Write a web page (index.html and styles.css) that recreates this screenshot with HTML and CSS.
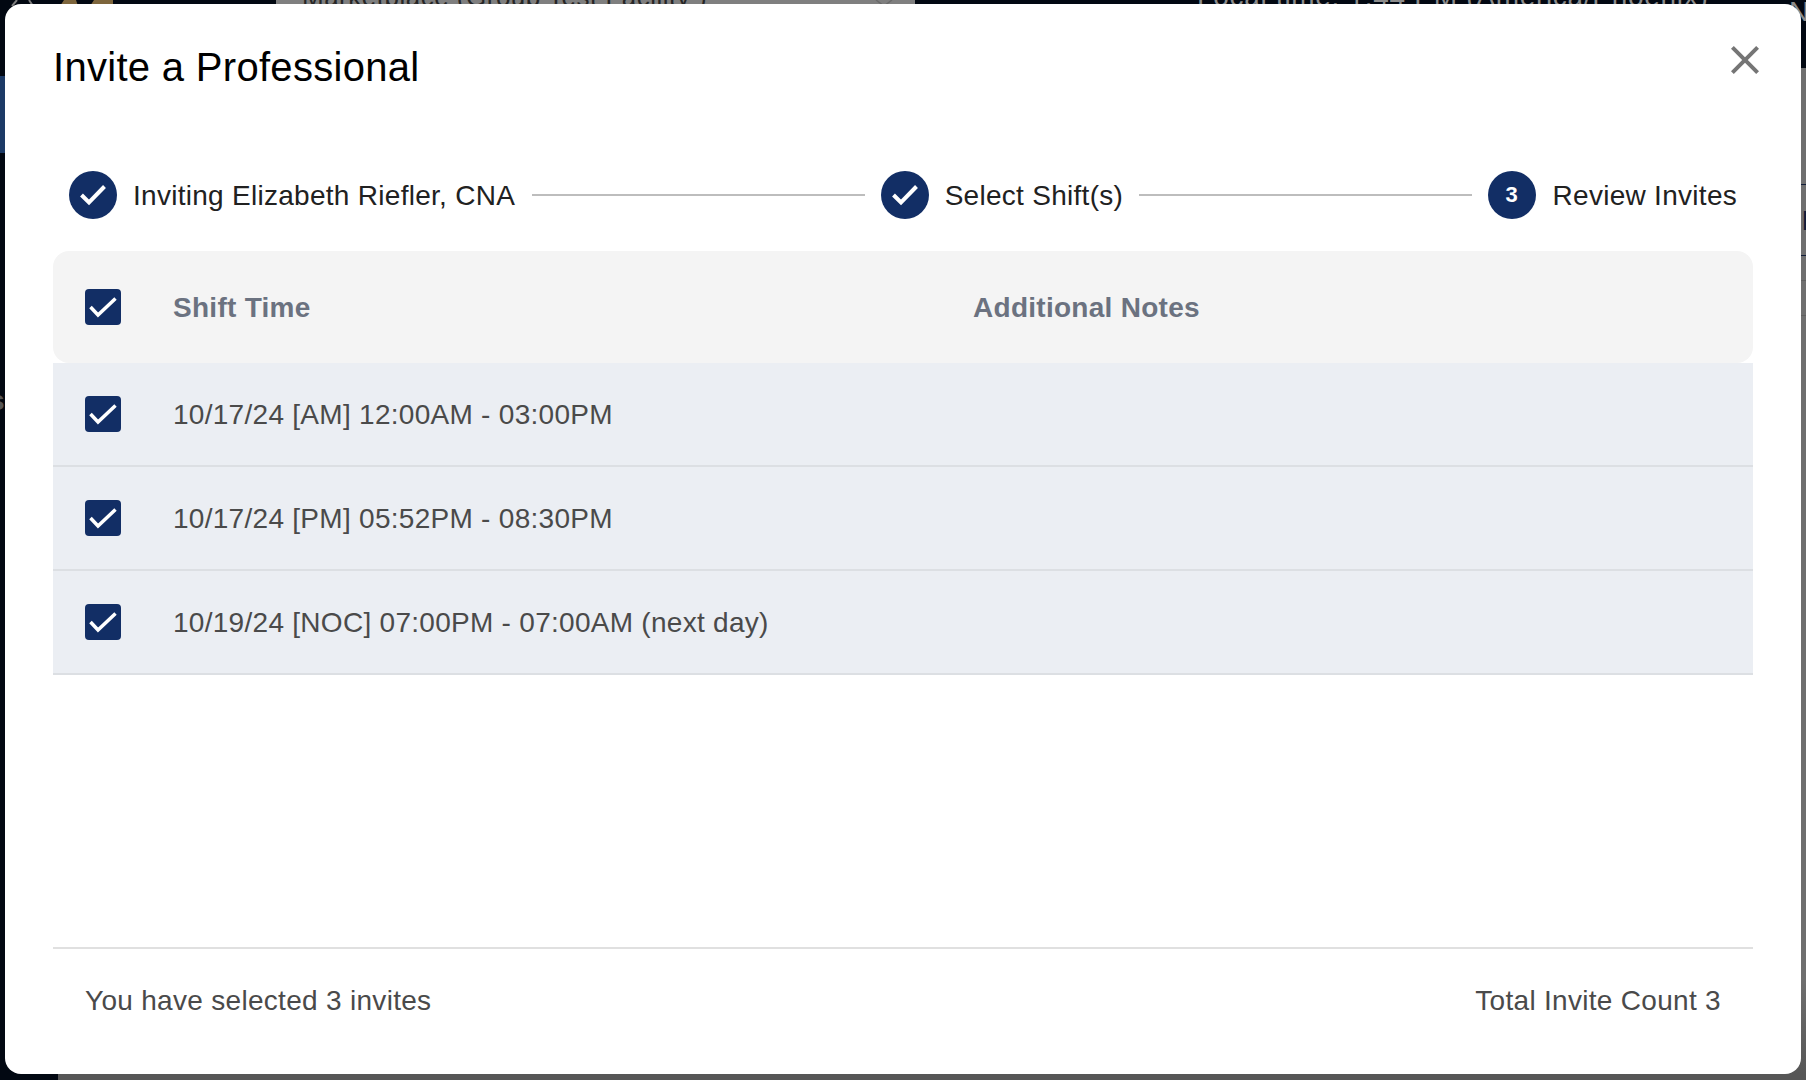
FILE: index.html
```html
<!DOCTYPE html>
<html lang="en">
<head>
<meta charset="utf-8">
<title>Invite a Professional</title>
<link rel="stylesheet" href="styles.css">
</head>
<body>
<div class="page">
  <header class="topbar">
    <svg class="logo" viewBox="0 0 113 6" width="113" height="6" aria-hidden="true">
      <path d="M12 6 17 0M29 0 33 6" stroke="#7d7d7d" stroke-width="2" fill="none"/>
      <path d="M60 6 64 0H76L78 6ZM90 6 94 0H113V6Z" fill="#7d653c"/>
    </svg>
    <div class="facility">
      <span class="facility-name">Marketplace (Group Test Facility )</span>
      <svg class="facility-caret" viewBox="0 0 18 6" width="18" height="6" aria-hidden="true"><path d="M1 0 9 6 17 0" stroke="#6a6a6a" stroke-width="1.5" fill="none"/></svg>
    </div>
    <span class="local-time">Local time: 1:44 PM (America/Phoenix)</span>
    <span class="user-initial">N</span>
  </header>
  <div class="under">
    <aside class="sidebar">
      <div class="side-active"></div>
      <span class="side-label">s</span>
    </aside>
    <main class="backdrop-main">
      <div class="back-rule back-rule-a"></div>
      <div class="back-heading">Date</div>
      <div class="back-rule back-rule-b"></div>
      <div class="back-rule back-rule-c"></div>
      <div class="back-rule back-rule-d"></div>
    </main>
  </div>

  <section class="modal" role="dialog" aria-label="Invite a Professional">
    <h2 class="modal-title">Invite a Professional</h2>
    <button class="close" aria-label="Close">
      <svg viewBox="0 0 24 24" width="48" height="48"><path d="M19 6.41 17.59 5 12 10.59 6.41 5 5 6.41 10.59 12 5 17.59 6.41 19 12 13.41 17.59 19 19 17.59 13.41 12z"/></svg>
    </button>

    <ol class="stepper">
      <li class="step step-first">
        <span class="step-dot"><svg viewBox="0 0 48 48" width="48" height="48"><polyline points="12.5,24 20,31.5 35.5,15.5"/></svg></span>
        <span class="step-label">Inviting Elizabeth Riefler, CNA</span>
      </li>
      <li class="step-line"></li>
      <li class="step">
        <span class="step-dot"><svg viewBox="0 0 48 48" width="48" height="48"><polyline points="12.5,24 20,31.5 35.5,15.5"/></svg></span>
        <span class="step-label">Select Shift(s)</span>
      </li>
      <li class="step-line"></li>
      <li class="step step-last">
        <span class="step-dot">3</span>
        <span class="step-label">Review Invites</span>
      </li>
    </ol>

    <div class="table">
      <div class="row row-head">
        <span class="box"><svg viewBox="0 0 36 36" width="36" height="36"><polyline points="5.5,18 13,26 30.5,9.5"/></svg></span>
        <span class="col-time">Shift Time</span>
        <span class="col-notes">Additional Notes</span>
      </div>
      <div class="row row-body">
        <span class="box"><svg viewBox="0 0 36 36" width="36" height="36"><polyline points="5.5,18 13,26 30.5,9.5"/></svg></span>
        <span class="col-time">10/17/24 [AM] 12:00AM - 03:00PM</span>
      </div>
      <div class="row row-body">
        <span class="box"><svg viewBox="0 0 36 36" width="36" height="36"><polyline points="5.5,18 13,26 30.5,9.5"/></svg></span>
        <span class="col-time">10/17/24 [PM] 05:52PM - 08:30PM</span>
      </div>
      <div class="row row-body">
        <span class="box"><svg viewBox="0 0 36 36" width="36" height="36"><polyline points="5.5,18 13,26 30.5,9.5"/></svg></span>
        <span class="col-time">10/19/24 [NOC] 07:00PM - 07:00AM (next day)</span>
      </div>
    </div>

    <footer class="modal-foot">
      <span>You have selected 3 invites</span>
      <span>Total Invite Count 3</span>
    </footer>
  </section>
</div>
</body>
</html>
```
FILE: styles.css
```css
* { box-sizing: border-box; }
html, body { margin: 0; height: 100%; }
body {
  font-family: "Liberation Sans", Arial, sans-serif;
  background: #020812;
  overflow: hidden;
}
.page {
  position: relative;
  height: 1080px;
  display: flex;
  flex-direction: column;
  overflow: hidden;
}

/* dimmed page behind the dialog */
.topbar {
  height: 68px;
  flex: none;
  display: flex;
  align-items: flex-start;
  background: #020812;
  overflow: hidden;
}
.logo { flex: none; display: block; }
.facility {
  flex: none;
  width: 639px;
  height: 40px;
  margin-left: 163px;
  padding-left: 26px;
  padding-right: 22px;
  background: #7f7f7f;
  display: flex;
  justify-content: space-between;
}
.facility-name {
  font-size: 26px;
  line-height: 28px;
  letter-spacing: 0.5px;
  margin-top: -17px;
  color: #262626;
  white-space: nowrap;
}
.facility-caret { flex: none; }
.local-time {
  flex: none;
  width: 560px;
  margin-left: 282px;
  font-size: 28px;
  line-height: 28px;
  letter-spacing: 0.7px;
  margin-top: -17px;
  color: #8c8c8c;
  white-space: nowrap;
}
.user-initial {
  flex: none;
  margin-left: 32px;
  font-size: 28px;
  line-height: 28px;
  margin-top: -2px;
  color: #8c8c8c;
}
.under { flex: 1; display: flex; min-height: 0; }
.sidebar {
  flex: none;
  width: 58px;
  padding-top: 8px;
  background: #020812;
  display: flex;
  flex-direction: column;
}
.side-active { height: 77px; background: #1c3a66; }
.side-label {
  margin-top: 234px;
  margin-left: -11px;
  font-size: 28px;
  font-weight: 700;
  line-height: 28px;
  color: #565656;
}
.backdrop-main {
  flex: 1;
  display: flex;
  flex-direction: column;
  background: linear-gradient(#6f6f6f, #6f6f6f 90%, #565656 99.5%);
}
.back-rule { height: 1px; background: #5f5f5f; }
.back-rule-a { margin-top: 116px; background: #0f1c38; }
.back-heading {
  height: 70px;
  padding-top: 22px;
  padding-left: 1744px;
  font-size: 28px;
  line-height: 28px;
  font-weight: 700;
  color: #0f1c38;
  white-space: nowrap;
}
.back-rule-b { background: #0f1c38; }
.back-rule-c { margin-top: 24px; }
.back-rule-d { margin-top: 34px; }

/* dialog */
.modal {
  position: absolute;
  left: 5px;
  top: 4px;
  width: 1796px;
  height: 1070px;
  padding: 39px 48px 0;
  background: #fff;
  border-radius: 16px;
  display: flex;
  flex-direction: column;
}
.modal-title {
  margin: 0;
  font-size: 40px;
  font-weight: 400;
  line-height: 48px;
  letter-spacing: 0.3px;
  color: #000;
}
.close {
  position: absolute;
  top: 32px;
  right: 32px;
  width: 48px;
  height: 48px;
  padding: 0;
  border: 0;
  background: none;
}
.close svg { display: block; fill: #757575; }

.stepper {
  list-style: none;
  margin: 80px 0 0;
  padding: 0 16px;
  display: flex;
  align-items: center;
  gap: 16px;
  height: 48px;
}
.step { display: flex; align-items: center; gap: 16px; flex: none; }
.step-first { margin-right: 1px; }
.step-last { gap: 17px; }
.step-dot {
  width: 48px;
  height: 48px;
  border-radius: 50%;
  background: #122e65;
  color: #fff;
  font-size: 22px;
  font-weight: 700;
  display: flex;
  align-items: center;
  justify-content: center;
}
.step-dot svg { display: block; fill: none; stroke: #fff; stroke-width: 4; }
.step-label {
  padding-top: 2px;
  font-size: 28px;
  line-height: 48px;
  letter-spacing: 0.28px;
  color: #212121;
  white-space: nowrap;
}
.step-line { flex: 1; height: 2px; background: #bdbdbd; }

.table { margin-top: 32px; }
.row {
  display: flex;
  align-items: center;
  padding-left: 32px;
  font-size: 28px;
  letter-spacing: 0.28px;
}
.row-head {
  height: 112px;
  background: #f4f4f4;
  border-radius: 16px;
  font-weight: 700;
  color: #6b7280;
}
.row-body {
  height: 104px;
  background: #ebeef3;
  border-bottom: 2px solid #dcdfe3;
  color: #4a4a4a;
}
.box {
  flex: none;
  width: 36px;
  height: 36px;
  border-radius: 4px;
  background: #122e65;
}
.box svg { display: block; fill: none; stroke: #fff; stroke-width: 3.5; }
.col-time {
  flex: none;
  width: 800px;
  margin-left: 52px;
  padding-top: 2px;
  white-space: nowrap;
}
.col-notes { padding-top: 2px; }

.modal-foot {
  margin-top: auto;
  height: 127px;
  border-top: 2px solid #e0e0e0;
  padding: 0 32px 21px;
  display: flex;
  align-items: center;
  justify-content: space-between;
  font-size: 28px;
  letter-spacing: 0.3px;
  color: #4a4a4a;
}
```
